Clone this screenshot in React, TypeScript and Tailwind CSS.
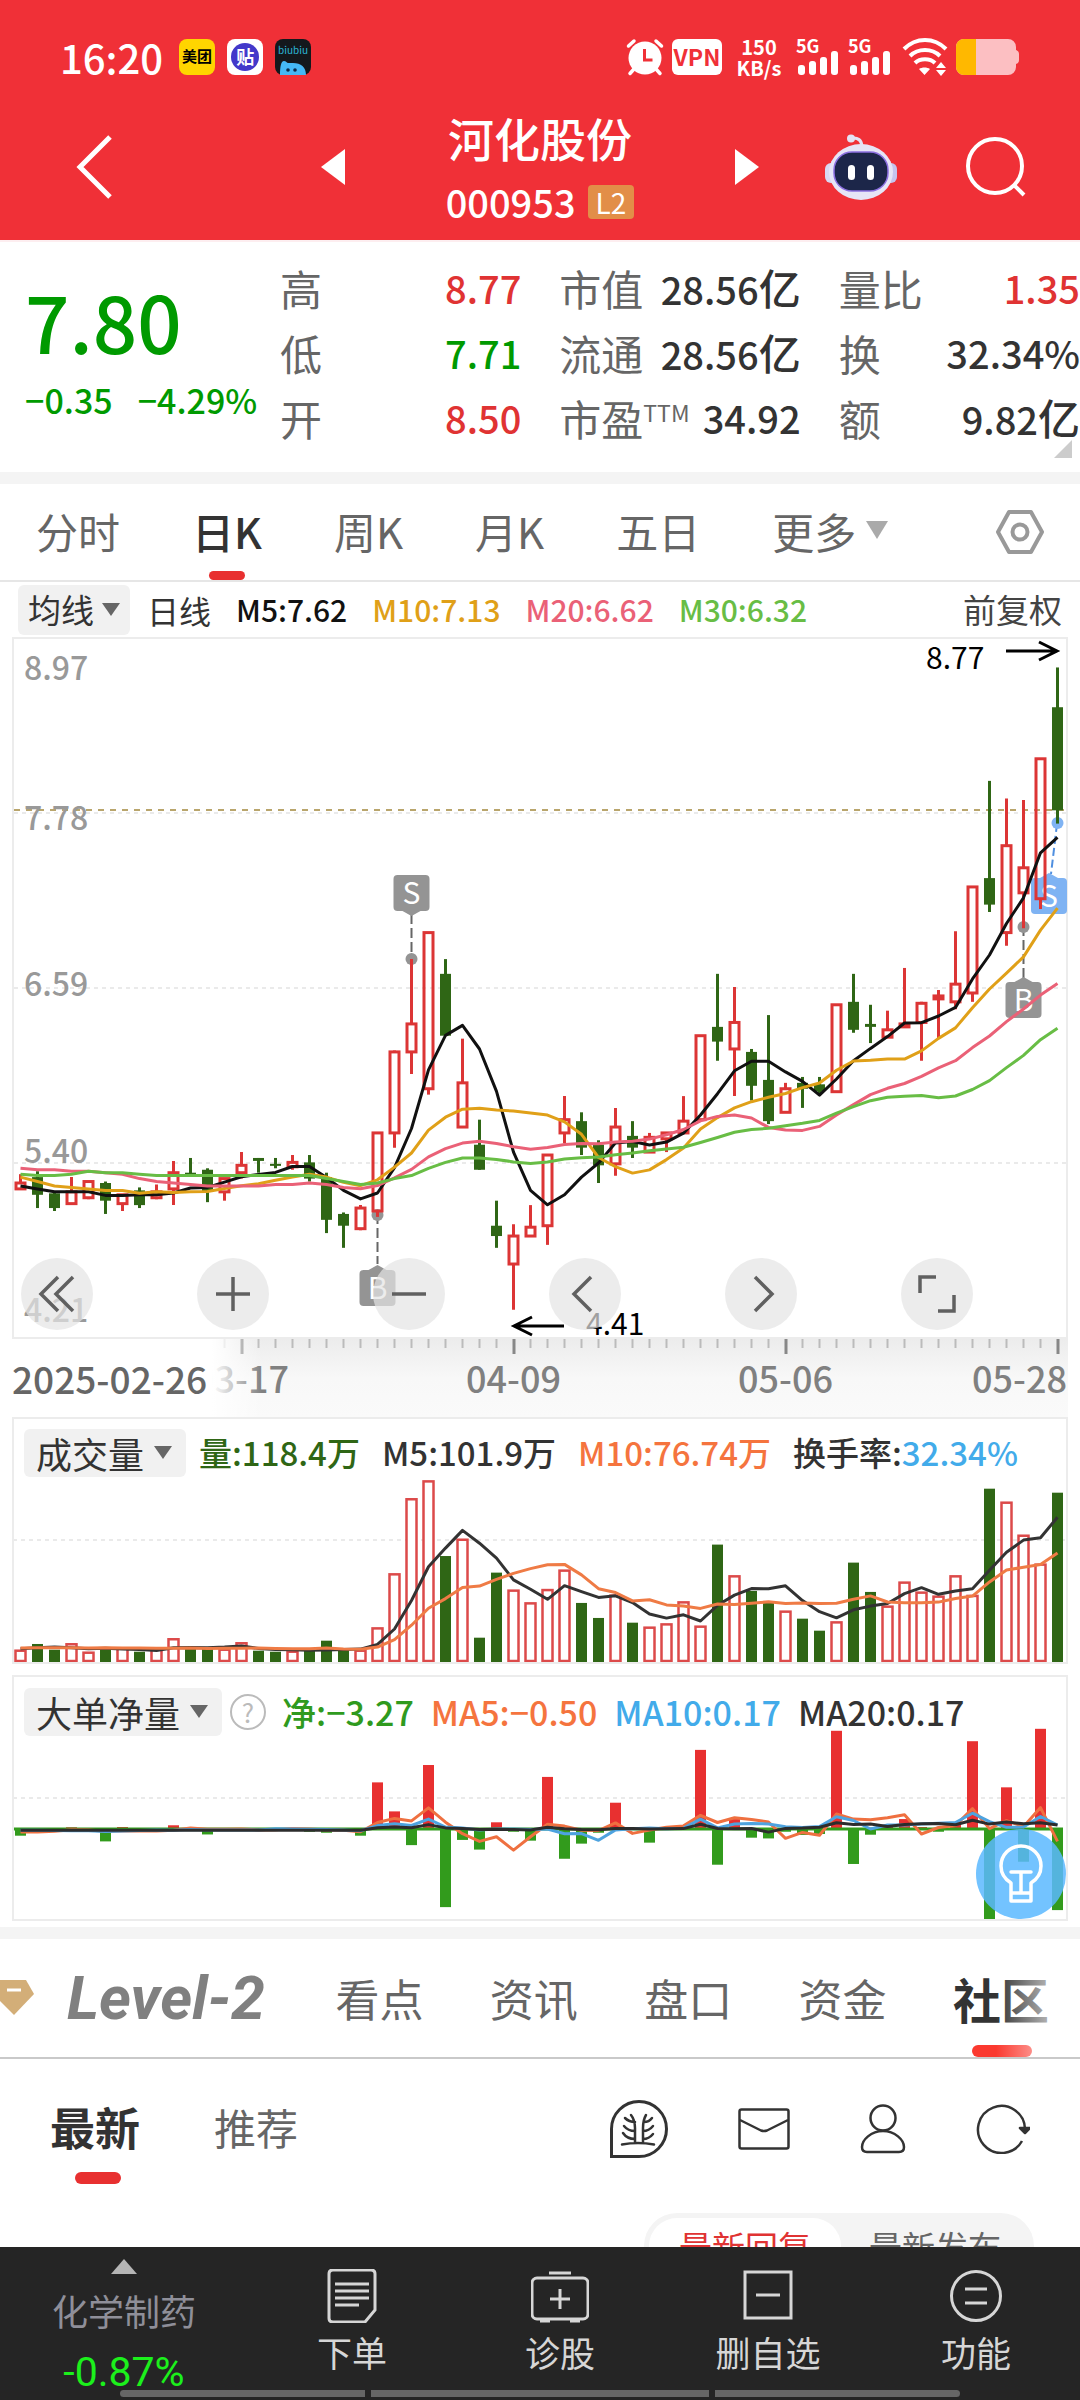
import { useState } from 'react';

type Candle = [open: number, close: number, high: number, low: number];

const candles: Candle[] = [
  [5.23, 5.27, 5.33, 5.23], [5.31, 5.19, 5.35, 5.1], [5.2, 5.1, 5.21, 5.08], [5.13, 5.21, 5.31, 5.12],
  [5.17, 5.28, 5.28, 5.16], [5.27, 5.15, 5.28, 5.06], [5.13, 5.19, 5.19, 5.08], [5.22, 5.12, 5.24, 5.1],
  [5.17, 5.21, 5.26, 5.16], [5.23, 5.34, 5.42, 5.12], [5.34, 5.32, 5.44, 5.32], [5.36, 5.21, 5.37, 5.14],
  [5.21, 5.3, 5.3, 5.15], [5.34, 5.39, 5.48, 5.3], [5.44, 5.42, 5.44, 5.34], [5.4, 5.39, 5.44, 5.37],
  [5.38, 5.41, 5.46, 5.36], [5.41, 5.3, 5.46, 5.28], [5.31, 5.02, 5.34, 4.93], [5.06, 4.98, 5.07, 4.83],
  [4.96, 5.1, 5.12, 4.95], [5.08, 5.61, 5.61, 5.04], [5.61, 6.16, 6.17, 5.51], [6.16, 6.35, 6.79, 6.01],
  [5.91, 6.97, 6.97, 5.87], [6.69, 6.27, 6.79, 6.27], [5.65, 5.95, 6.25, 5.65], [5.53, 5.36, 5.7, 5.36],
  [4.98, 4.91, 5.15, 4.83], [4.72, 4.91, 4.99, 4.41], [4.91, 4.97, 5.12, 4.91], [4.98, 5.46, 5.46, 4.85],
  [5.61, 5.7, 5.86, 5.54], [5.69, 5.51, 5.75, 5.46], [5.53, 5.39, 5.56, 5.27], [5.4, 5.65, 5.78, 5.32],
  [5.59, 5.51, 5.69, 5.44], [5.48, 5.58, 5.61, 5.48], [5.57, 5.61, 5.61, 5.48], [5.61, 5.69, 5.86, 5.61],
  [5.7, 6.27, 6.27, 5.7], [6.33, 6.23, 6.69, 6.1], [6.18, 6.36, 6.6, 5.86], [6.16, 5.93, 6.18, 5.83],
  [5.97, 5.69, 6.41, 5.67], [5.75, 5.91, 5.95, 5.75], [5.95, 5.91, 5.99, 5.78], [5.94, 5.89, 5.99, 5.87],
  [5.89, 6.48, 6.48, 5.89], [6.5, 6.31, 6.69, 6.29], [6.35, 6.33, 6.48, 6.22], [6.26, 6.31, 6.44, 6.26],
  [6.33, 6.35, 6.73, 6.33], [6.36, 6.49, 6.5, 6.1], [6.52, 6.54, 6.58, 6.25], [6.5, 6.62, 6.98, 6.45],
  [6.56, 7.28, 7.28, 6.5], [7.34, 7.16, 8.0, 7.11], [6.97, 7.56, 7.88, 6.88], [7.24, 7.41, 7.87, 7.0],
  [7.2, 8.15, 8.15, 7.13], [8.5, 7.8, 8.77, 7.71],
];

const volumes = [
  8.6, 12.6, 8.6, 13.1, 7.2, 10, 10, 7.2, 9.8, 16.6, 10.5, 9.3, 9.3, 13.8, 7.9, 7.2, 7.9, 7.9, 14.9, 9.3, 8.6,
  24.2, 62, 114.5, 127, 74.1, 86.2, 17, 62.5, 50.6, 41.7, 51, 64.6, 41.3, 30.8, 47.1, 27.5, 24.7, 27, 42.4, 25.4,
  82.1, 60.6, 49.7, 41.7, 35.9, 30.3, 21.9, 28.4, 69.5, 49, 39.4, 56.2, 49.2, 46.4, 60.6, 46.9, 121.2, 112.1, 89,
  68.8, 118.4,
];

const netVolumes = [
  -0.27, 0, -0.03, 0.07, 0, -0.5, 0.08, 0, 0, 0.15, 0, -0.22, 0, 0.04, 0, 0.04, 0, -0.11, -0.15, -0.04, -0.27, 1.88,
  0.71, -0.65, 2.58, -3.15, -0.44, -0.83, 0.27, -0.11, -0.47, 2.1, -1.2, -0.59, -0.15, 1.06, 0, -0.55, 0, 0.11, 3.19,
  -1.44, 0.4, -0.35, -0.38, -0.11, -0.24, -0.2, 3.96, -1.41, -0.23, 0.16, 0.4, 0.08, -0.11, 0.2, 3.54, -3.63, 1.68,
  -1.32, 4.04, -3.27,
];

const closes = candles.map((c) => c[1]);

// `head` holds the values for the first days, where the window reaches back before the visible range
const movingAverage = (values: number[], n: number, head: number[]) =>
  values.map((_, i) => (i < n - 1 ? head[i] : values.slice(i - n + 1, i + 1).reduce((a, b) => a + b, 0) / n));

const ma5 = movingAverage(closes, 5, [5.25, 5.23, 5.21, 5.21]);
const ma10 = movingAverage(closes, 10, [5.31, 5.28, 5.25, 5.24, 5.23, 5.22, 5.22, 5.2, 5.21]);
const ma20 = movingAverage(closes, 20, [
  5.37, 5.36, 5.36, 5.35, 5.35, 5.34, 5.33, 5.3, 5.28, 5.27, 5.26, 5.25, 5.25, 5.25, 5.25, 5.26, 5.26, 5.27, 5.26,
]);
const ma30 = movingAverage(closes, 30, [
  5.33, 5.32, 5.32, 5.33, 5.35, 5.34, 5.34, 5.33, 5.32, 5.32, 5.32, 5.32, 5.32, 5.32, 5.32, 5.32, 5.32, 5.32, 5.3,
  5.28, 5.26, 5.27, 5.3, 5.32, 5.37, 5.41, 5.44, 5.44, 5.43,
]);
const vol5 = movingAverage(volumes, 5, [10, 10.6, 11.2, 10.6]);
const vol10 = movingAverage(volumes, 10, [10.5, 10.7, 10.7, 10.7, 10.4, 10.7, 10.5, 10.4, 10.3]);
const net5 = movingAverage(netVolumes, 5, [-0.12, -0.12, -0.09, -0.03]);
const net10 = movingAverage(netVolumes, 10, [-0.05, -0.05, -0.06, -0.07, -0.07, -0.1, -0.08, -0.06, -0.04]);
const net20 = movingAverage(netVolumes, 20, Array(19).fill(-0.05));

const RED = '#dc3535';
const GREEN = '#2f6615';

const xAt = (i: number) => 7.5 + i * 17;
const priceY = (p: number) => (8.97 - p) * 147.3;
const volY = (v: number) => 245 - v * 1.43;
const netY = (v: number) => 153 - v * 24.8;

const Line = ({ data, y, color }: { data: number[]; y: (v: number) => number; color: string }) => (
  <polyline
    points={data.map((v, i) => `${xAt(i)},${y(v).toFixed(1)}`).join(' ')}
    fill="none"
    stroke={color}
    strokeWidth="3"
    strokeLinejoin="round"
  />
);

const SignalIcon = () => (
  <svg viewBox="0 0 44 38" className="h-[38px] w-11 overflow-visible" aria-hidden="true">
    <text x="0" y="15" fontSize="18" fontWeight="700" fill="#fff">5G</text>
    <rect x="2" y="27" width="7" height="10" rx="3" fill="#fff" />
    <rect x="13" y="23" width="7" height="14" rx="3" fill="#fff" />
    <rect x="24" y="19" width="7" height="18" rx="3" fill="#fff" />
    <rect x="35" y="13" width="7" height="24" rx="3" fill="#fff" />
  </svg>
);

const StatusBar = () => (
  <div className="flex h-[105px] items-center justify-between pt-2 pr-[60px] pl-[60px] text-white">
    <div className="flex items-center gap-3">
      <span className="mr-1 text-[40px] leading-none font-medium">16:20</span>
      <span className="flex h-9 w-9 items-center justify-center rounded-lg bg-[#ffd500] text-[15px] font-bold text-black">美团</span>
      <span className="flex h-9 w-9 items-center justify-center rounded-lg bg-white">
        <span className="flex h-7 w-7 items-center justify-center rounded-full bg-[#4338ca] text-[18px] font-bold text-white">贴</span>
      </span>
      <svg viewBox="0 0 36 36" className="h-9 w-9" aria-hidden="true">
        <rect width="36" height="36" rx="8" fill="#14181c" />
        <text x="18" y="15" textAnchor="middle" fontSize="10" fill="#2bb6d8">biubiu</text>
        <path d="M5 36c0-8 1-14 4-14 2 0 3 2 4 2h5c8 0 13 4 13 12z" fill="#45b8f5" />
        <circle cx="13" cy="31" r="1.8" fill="#0d2a4a" />
        <circle cx="20" cy="31" r="1.8" fill="#0d2a4a" />
      </svg>
    </div>
    <div className="flex items-center">
      <svg viewBox="0 0 38 38" className="mr-2 h-[38px] w-[38px]" aria-hidden="true">
        <g stroke="#fff" strokeWidth="3.5" strokeLinecap="round">
          <path d="M2.500 8L8 3M35.500 8L30 3M8 31l-4 4.500M30 31l4 4.500" />
        </g>
        <circle cx="19" cy="20" r="16.500" fill="#fff" />
        <path d="M18.500 11v11h8" fill="none" stroke="#f03037" strokeWidth="3" />
      </svg>
      <span className="flex h-9 w-[50px] items-center justify-center rounded-md bg-white text-[23px] leading-none font-bold text-[#f03037]">VPN</span>
      <span className="flex w-[74px] flex-col items-center text-[20px] leading-[21px] font-bold">
        <span>150</span>
        <span>KB/s</span>
      </span>
      <div className="flex gap-2">
        <SignalIcon />
        <SignalIcon />
      </div>
      <svg viewBox="0 0 46 38" className="ml-2.5 h-[38px] w-[46px]" aria-hidden="true">
        <g fill="none" stroke="#fff" strokeWidth="4">
          <path d="M2 11C14-1 32-1 44 11" />
          <path d="M8 18c8-8 22-8 30 0" />
          <path d="M13 25c5-5 15-5 20 0" />
        </g>
        <path d="M17 31c3-2 8-2 11 0l-5.500 6zM34 30l5-6 5 6zM34 32h10l-5 6z" fill="#fff" />
      </svg>
      <svg viewBox="0 0 64 36" className="ml-2 h-9 w-16" aria-hidden="true">
        <path d="M8 0h44a8 8 0 0 1 8 8v3q3 1 3 4v6q0 3-3 4v3a8 8 0 0 1-8 8H8a8 8 0 0 1-8-8V8a8 8 0 0 1 8-8z" fill="#fcbfc2" />
        <path d="M20 0H8a8 8 0 0 0-8 8v20a8 8 0 0 0 8 8h12z" fill="#ffb800" />
      </svg>
    </div>
  </div>
);

const Robot = () => (
  <svg viewBox="0 0 72 66" className="h-[66px] w-[72px]" aria-hidden="true">
    <path d="M27 4q9-1 10 8" fill="none" stroke="#e4e2f4" strokeWidth="3" />
    <circle cx="26" cy="4.500" r="4" fill="#e4e2f4" />
    <rect x="0" y="29" width="12" height="20" rx="6" fill="#d9d8f2" />
    <rect x="60" y="29" width="12" height="20" rx="6" fill="#c5c4ee" />
    <ellipse cx="36" cy="38" rx="32" ry="28" fill="#e6e5f6" />
    <rect x="9" y="18" width="54" height="39" rx="18" fill="#1c2649" stroke="#8b6fe0" strokeWidth="1.500" />
    <rect x="23" y="31" width="7" height="15" rx="3.500" fill="#fff" />
    <rect x="42" y="31" width="7" height="15" rx="3.500" fill="#fff" />
  </svg>
);

const TitleBar = () => (
  <div className="grid h-[135px] grid-cols-[1fr_438px_1fr] items-center pb-3 text-white">
    <button type="button" aria-label="返回" className="pl-[74px]">
      <svg viewBox="0 0 40 66" className="h-[66px] w-10" aria-hidden="true">
        <path d="M36 3L6 33l30 30" fill="none" stroke="#fff" strokeWidth="5" />
      </svg>
    </button>
    <div className="flex items-center justify-between">
      <button type="button" aria-label="上一只">
        <svg viewBox="0 0 24 36" className="h-9 w-6" aria-hidden="true"><path d="M24 0v36L0 18z" fill="#fff" /></svg>
      </button>
      <div className="flex flex-col items-center gap-5">
        <h1 className="text-[46px] leading-[50px] font-medium">河化股份</h1>
        <div className="flex items-center gap-3 text-[38px] leading-10 font-medium">
          000953
          <span className="rounded bg-[#e28e48] px-2 text-[28px] leading-[34px] font-normal">L2</span>
        </div>
      </div>
      <button type="button" aria-label="下一只">
        <svg viewBox="0 0 24 36" className="h-9 w-6" aria-hidden="true"><path d="M0 0v36l24-18z" fill="#fff" /></svg>
      </button>
    </div>
    <div className="flex items-center justify-between pr-[54px] pl-[66px]">
      <button type="button" aria-label="智能助手"><Robot /></button>
      <button type="button" aria-label="搜索">
        <svg viewBox="0 0 60 60" className="h-[60px] w-[60px]" aria-hidden="true">
          <circle cx="29" cy="29" r="27" fill="none" stroke="#fff" strokeWidth="4" />
          <path d="M48 48l10 10" stroke="#fff" strokeWidth="4" />
        </svg>
      </button>
    </div>
  </div>
);

type QuoteRowProps = { label: string; sup?: string; value: string; unit?: string; tone?: string };

const QuoteRow = ({ label, sup, value, unit, tone = 'text-[#333]' }: QuoteRowProps) => (
  <div className="flex h-[65px] items-center justify-between whitespace-nowrap">
    <dt className="text-[42px] text-[#666]">
      {label}
      {sup && <sup className="top-[-14px] text-[23px]">{sup}</sup>}
    </dt>
    <dd className={`text-[38px] font-medium ${tone}`}>
      {value}
      {unit && <span className="text-[42px]">{unit}</span>}
    </dd>
  </div>
);

const Quote = () => (
  <section className="relative flex h-[232px] border-t-2 border-[#fdeef0] bg-white">
    <div className="w-[280px] shrink-0 pt-[38px] pl-[25px] text-[#009a00]">
      <p className="text-[78px] leading-20 font-medium">7.80</p>
      <p className="mt-4 flex gap-[25px] text-[34px] leading-12 font-medium">
        <span>−0.35</span>
        <span>−4.29%</span>
      </p>
    </div>
    <dl className="grid flex-1 grid-cols-3 gap-x-[38px] pt-[13px] leading-[65px]">
      <div>
        <QuoteRow label="高" value="8.77" tone="text-[#e03333]" />
        <QuoteRow label="低" value="7.71" tone="text-[#009a00]" />
        <QuoteRow label="开" value="8.50" tone="text-[#e03333]" />
      </div>
      <div>
        <QuoteRow label="市值" value="28.56" unit="亿" />
        <QuoteRow label="流通" value="28.56" unit="亿" />
        <QuoteRow label="市盈" sup="TTM" value="34.92" />
      </div>
      <div>
        <QuoteRow label="量比" value="1.35" tone="text-[#e03333]" />
        <QuoteRow label="换" value="32.34%" />
        <QuoteRow label="额" value="9.82" unit="亿" />
      </div>
    </dl>
    <svg viewBox="0 0 18 18" className="absolute right-2 bottom-[14px] h-[18px] w-[18px]" aria-hidden="true">
      <path d="M18 0v18H0z" fill="#ccc" />
    </svg>
  </section>
);

const periods = ['分时', '日K', '周K', '月K', '五日', '更多'];

const Caret = ({ className }: { className: string }) => (
  <svg viewBox="0 0 20 14" preserveAspectRatio="none" className={className} aria-hidden="true"><path d="M0 0h20L10 14z" fill="currentColor" /></svg>
);

const PeriodTabs = () => {
  const [active, setActive] = useState('日K');
  return (
    <nav className="flex h-[98px] items-center justify-between border-b-2 border-[#e6e6e6] bg-white pr-9 pl-9">
      <div className="flex h-full gap-[72px]">
        {periods.map((p) => (
          <button
            key={p}
            type="button"
            onClick={() => setActive(p)}
            className={`relative flex items-center gap-2.5 pb-1 text-[42px] ${active === p ? 'font-medium text-[#333]' : 'text-[#666]'}`}
          >
            {p}
            {p === '更多' && <Caret className="h-[18px] w-[22px] text-[#aaa]" />}
            {active === p && <span className="absolute bottom-0 left-1/2 h-[9px] w-9 -translate-x-1/2 rounded-full bg-[#e83030]" />}
          </button>
        ))}
      </div>
      <button type="button" aria-label="设置">
        <svg viewBox="0 0 48 48" className="h-12 w-12" fill="none" stroke="#999" strokeWidth="4" strokeLinejoin="round" aria-hidden="true">
          <path d="M13 4h22l11 20-11 20H13L2 24z" />
          <circle cx="24" cy="24" r="7.500" />
        </svg>
      </button>
    </nav>
  );
};

const Chip = ({ children }: { children: string }) => (
  <button type="button" className="flex h-12 items-center gap-2.5 rounded-md bg-[#f1f1f1] pr-[14px] pl-3 text-[36px] font-normal whitespace-nowrap text-[#333]">
    {children}
    <Caret className="h-[13px] w-[18px] text-[#666]" />
  </button>
);

const Marker = ({ x, y, label, down, fill = '#949494' }: { x: number; y: number; label: string; down?: boolean; fill?: string }) => (
  <g>
    <rect x={x - 18} y={y} width="36" height="36" rx="4" fill={fill} />
    <path d={down ? `M${x - 9} ${y + 36}h18l-9 5z` : `M${x - 9} ${y}h18l-9-5z`} fill={fill} />
    <text x={x} y={y + 29} textAnchor="middle" fontSize="30" fill="#fff">{label}</text>
  </g>
);

const axisLabels = [
  { y: 42, text: '8.97' },
  { y: 192, text: '7.78' },
  { y: 358, text: '6.59' },
  { y: 525, text: '5.40' },
  { y: 684, text: '4.21' },
];

const chartButtons = [
  { label: '更早', path: 'M26 8L9 25l17 17M41 8L24 25l17 17' },
  { label: '放大', path: 'M25 8v34M8 25h34' },
  { label: '缩小', path: 'M8 25h34' },
  { label: '左移', path: 'M31 8L14 25l17 17' },
  { label: '右移', path: 'M19 8l17 17-17 17' },
  { label: '全屏', path: 'M8 24V8h16M42 26v16H26' },
];

const PriceChart = () => (
  <div className="relative mx-3 border-2 border-[#ececec]">
    <svg viewBox="1 1 1052 698" className="block h-auto w-full overflow-visible" role="img" aria-label="日K线图">
      <g stroke="#e3e3e3" strokeWidth="1.500" strokeDasharray="4 4">
        <path d="M1 175H1053M1 350H1053M1 525H1053" />
      </g>
      <path d="M1 172H1053" stroke="#b9a56c" strokeWidth="2" strokeDasharray="6 6" />
      {axisLabels.map((a) => (
        <text key={a.text} x="11" y={a.y} fontSize="32" fontWeight="500" fill="#999">{a.text}</text>
      ))}
      <g stroke="#666" strokeWidth="2" strokeDasharray="10 4">
        <path d="M398.500 276V322M364.500 576V626M1010.500 288V340" />
      </g>
      <path d="M1044 186L1038 236" stroke="#4f8fe0" strokeWidth="2" strokeDasharray="8 4" />
      <circle cx="398.500" cy="321" r="6" fill="#949494" />
      <circle cx="364.500" cy="577" r="6" fill="#949494" />
      <circle cx="1010.500" cy="289" r="6" fill="#949494" />
      <circle cx="1044.500" cy="185" r="6" fill="#7fb3f3" />
      <Marker x={398.5} y={237} label="S" down />
      <Marker x={364.5} y={632} label="B" />
      <Marker x={1010.5} y={344} label="B" />
      <Marker x={1036} y={240} label="S" fill="#7fb3f3" />
      {candles.map(([open, close, high, low], i) => {
        const x = xAt(i);
        const up = close >= open;
        const top = priceY(Math.max(open, close));
        const height = Math.max(Math.abs(priceY(open) - priceY(close)), 2);
        return up ? (
          <g key={i} stroke={RED} strokeWidth="3" fill="none">
            <path d={`M${x} ${priceY(high)}V${top}M${x} ${top + height}V${priceY(low)}`} />
            <rect x={x - 4.5} y={top} width="9" height={height} />
          </g>
        ) : (
          <g key={i} fill={GREEN}>
            <rect x={x - 1.5} y={priceY(high)} width="3" height={priceY(low) - priceY(high)} />
            <rect x={x - 5.5} y={top} width="11" height={height} />
          </g>
        );
      })}
      <Line data={ma5} y={priceY} color="#111" />
      <Line data={ma10} y={priceY} color="#e0a018" />
      <Line data={ma20} y={priceY} color="#ea6177" />
      <Line data={ma30} y={priceY} color="#68bd45" />
      <text x="913" y="31" fontSize="30" fill="#000">8.77</text>
      <text x="573" y="697" fontSize="30" fill="#000">4.41</text>
      <path d="M993 13h50M1026 4l18 9-18 9M551 688h-49M519 679l-18 9 18 9" fill="none" stroke="#000" strokeWidth="3" />
    </svg>
    <div className="absolute bottom-[7px] left-[7px] flex gap-[104px]">
      {chartButtons.map((b) => (
        <button key={b.label} type="button" aria-label={b.label} className="flex h-[72px] w-[72px] items-center justify-center rounded-full bg-[#e4e4e4]/70">
          <svg viewBox="0 0 50 50" className="h-[50px] w-[50px]" fill="none" stroke="#606060" strokeWidth="3.500" aria-hidden="true">
            <path d={b.path} />
          </svg>
        </button>
      ))}
    </div>
  </div>
);

const dates = [
  { i: 13, text: '03-17' },
  { i: 29, text: '04-09' },
  { i: 45, text: '05-06' },
];

const TimeAxis = () => (
  <div className="relative mx-3 bg-linear-to-b from-[#ececec] via-[#f8f8f8] to-[#fafafa]">
    <svg viewBox="0 0 1056 78" className="block h-auto w-full" aria-hidden="true">
      {candles.map((_, i) => (
        <rect key={i} x={xAt(i)} y="0" width={i % 16 === 13 ? 3 : 2} height={i % 16 === 13 ? 15 : 9} fill={i % 16 === 13 ? '#888' : '#bbb'} />
      ))}
      {dates.map((d) => (
        <text key={d.text} x={xAt(d.i) + 1} y="54" textAnchor="middle" fontSize="36" fontWeight="500" fill="#808080">{d.text}</text>
      ))}
      <text x="1055" y="54" textAnchor="end" fontSize="36" fontWeight="500" fill="#808080">05-28</text>
    </svg>
    <span className="absolute inset-y-0 left-0 flex w-[250px] items-start bg-linear-to-r from-white from-80% to-transparent pt-5 text-[37px] leading-[38px] font-medium whitespace-nowrap text-[#666]">
      2025-02-26
    </span>
  </div>
);

const VolumeChart = () => (
  <div className="relative mx-3 border-2 border-[#ececec]">
    <div className="absolute top-[9px] left-[10px] flex items-center gap-[13px] text-[33px] font-medium whitespace-nowrap">
      <Chip>成交量</Chip>
      <div className="flex gap-[22px]">
        <span className="text-[#2f6615]">量:118.4万</span>
        <span className="text-[#333]">M5:101.9万</span>
        <span className="text-[#f5743e]">M10:76.74万</span>
        <span className="text-[#333]">换手率:<span className="text-[#42abea]">32.34%</span></span>
      </div>
    </div>
    <svg viewBox="1 1 1052 243" className="block h-auto w-full" role="img" aria-label="成交量">
      <path d="M0 122H1056" stroke="#e3e3e3" strokeWidth="1.500" strokeDasharray="4 4" />
      {volumes.map((v, i) => {
        const up = candles[i][1] >= candles[i][0];
        return up ? (
          <rect key={i} x={xAt(i) - 5} y={volY(v)} width="10" height={243 - volY(v)} fill="#fff" stroke="#dc4a4a" strokeWidth="2.5" />
        ) : (
          <rect key={i} x={xAt(i) - 5.5} y={volY(v) - 1} width="11" height={246 - volY(v)} fill={GREEN} />
        );
      })}
      <Line data={vol5} y={volY} color="#333" />
      <Line data={vol10} y={volY} color="#ef7b45" />
    </svg>
  </div>
);

const NetChart = () => (
  <div className="relative mx-3 mt-[11px] border-2 border-[#ececec]">
    <div className="absolute top-[9px] left-[10px] z-10 flex items-center gap-2 text-[34px] font-medium whitespace-nowrap">
      <Chip>大单净量</Chip>
      <button type="button" aria-label="说明" className="flex h-9 w-9 items-center justify-center rounded-full border-2 border-[#bbb] text-[26px] leading-none font-normal text-[#bbb]">?</button>
      <div className="ml-2 flex gap-[17px]">
        <span className="text-[#2f9a1e]">净:−3.27</span>
        <span className="text-[#f5743e]">MA5:−0.50</span>
        <span className="text-[#42abea]">MA10:0.17</span>
        <span className="text-[#333]">MA20:0.17</span>
      </div>
    </div>
    <svg viewBox="1 1 1052 242" className="block h-auto w-full" role="img" aria-label="大单净量">
      <path d="M0 122H1056" stroke="#e3e3e3" strokeWidth="1.500" strokeDasharray="4 4" />
      {netVolumes.map((v, i) => (
        <rect
          key={i}
          x={xAt(i) - 5.5}
          y={Math.min(netY(0), netY(v))}
          width="11"
          height={Math.abs(netY(v) - netY(0))}
          fill={v > 0 ? '#e83030' : '#329b1c'}
        />
      ))}
      <path d="M0 153H1050" stroke="#329b1c" strokeWidth="3" />
      <Line data={net5} y={netY} color="#ef7040" />
      <Line data={net10} y={netY} color="#4ea3df" />
      <Line data={net20} y={netY} color="#2c2c2c" />
    </svg>
    <button type="button" aria-label="提示" className="absolute right-0 bottom-0 flex h-[90px] w-[90px] items-center justify-center rounded-full bg-[#5ab8ff]/85">
      <svg viewBox="0 0 46 60" className="h-[60px] w-[46px]" fill="none" stroke="#fff" strokeWidth="3.500" strokeLinejoin="round" strokeLinecap="round" aria-hidden="true">
        <path d="M13 39C5 34 3 28 3 22a20 20 0 0 1 40 0c0 6-2 12-10 17v18H13zM13 49h20M13 28h20M23 28v21" />
      </svg>
    </button>
  </div>
);

const sections = ['看点', '资讯', '盘口', '资金'];

const SectionTabs = () => (
  <nav className="relative flex h-[120px] items-center overflow-hidden border-b-2 border-[#c9c9c9] bg-white pr-[31px]">
    <svg viewBox="0 0 34 36" className="h-9 w-[34px] shrink-0" aria-hidden="true">
      <path d="M0 0h26l8 14-20 21L0 21z" fill="#d3ae78" />
      <path d="M7 10h14" stroke="#fff" strokeWidth="3" />
    </svg>
    <div className="ml-[33px] flex flex-1 items-center justify-between text-[44px] text-[#666]">
      <a href="#level2" className="mr-1 font-[Roboto] text-[61px] leading-none font-bold text-[#808080] italic">Level-2</a>
      {sections.map((s) => (
        <a key={s} href={`#${s}`}>{s}</a>
      ))}
      <a href="#社区" className="relative flex h-[118px] items-center text-[48px] font-bold text-[#333]">
        社区
        <span className="absolute bottom-0 left-[19px] h-3 w-[60px] rounded-full bg-[#fb392f]" />
      </a>
    </div>
    <span className="pointer-events-none absolute top-0 right-0 bottom-0 w-[84px] bg-linear-to-r from-transparent to-white" />
  </nav>
);

const Community = () => (
  <section className="bg-white">
    <div className="flex items-start justify-between pt-[37px] pr-[50px] pl-[50px]">
      <div className="flex gap-[74px]">
        <button type="button" className="relative pb-[26px] text-[45px] leading-[62px] font-bold text-[#333]">
          最新
          <span className="absolute bottom-0 left-[25px] h-3 w-[46px] rounded-full bg-[#e83030]" />
        </button>
        <button type="button" className="pb-[26px] text-[42px] leading-[62px] text-[#666]">推荐</button>
      </div>
      <div className="flex h-[66px] items-center gap-[70px] text-[#333]">
        <button type="button" aria-label="韭菜公社">
          <svg viewBox="0 0 58 58" className="h-[58px] w-[58px]" fill="none" stroke="currentColor" strokeWidth="2.500" strokeLinecap="round" aria-hidden="true">
            <path d="M1.500 56.500V29A27.500 27.500 0 1 1 29 56.500z" strokeWidth="3" />
            <path d="M12 44.500q16-3 32 0M25 43V28q0-8-4-13M33 43V28q0-8 3-13M25 22q-6 0-10-4M25 31q-7 0-11-5M25 39q-8 0-12-6M34 22q5 0 8-4M33 31q6 0 10-5M33 39q6 0 10-5" />
          </svg>
        </button>
        <button type="button" aria-label="消息">
          <svg viewBox="0 0 52 42" className="h-[42px] w-[52px]" fill="none" stroke="currentColor" strokeWidth="2.500" strokeLinejoin="round" aria-hidden="true">
            <rect x="1.500" y="1.500" width="49" height="39" rx="2" />
            <path d="M2 12l21 10.500q3 1 6 0L50 12" />
          </svg>
        </button>
        <button type="button" aria-label="我的">
          <svg viewBox="0 0 46 50" className="h-[50px] w-[46px]" fill="none" stroke="currentColor" strokeWidth="2.500" aria-hidden="true">
            <circle cx="23" cy="14" r="12.500" />
            <path d="M23 27C11 27 2 36 2 43q0 5 5 5h32q5 0 5-5C44 36 35 27 23 27z" />
          </svg>
        </button>
        <button type="button" aria-label="刷新">
          <svg viewBox="0 0 54 50" className="h-[50px] w-[54px]" fill="none" stroke="currentColor" strokeWidth="2.500" aria-hidden="true">
            <path d="M46 37a23.500 23.500 0 1 1 3-12" />
            <path d="M44 24h10l-5 5z" fill="currentColor" strokeLinejoin="round" />
          </svg>
        </button>
      </div>
    </div>
    <div className="mt-[29px] mr-[46px] ml-auto flex w-fit rounded-full bg-[#f4f4f4] p-[5px] text-[33px] leading-[56px]">
      <button type="button" className="rounded-full bg-white px-[30px] text-[#e03333]">最新回复</button>
      <button type="button" className="px-7 text-[#666]">最新发布</button>
    </div>
  </section>
);

const actions = [
  {
    label: '下单',
    icon: (
      <>
        <path d="M5 1h38q4 0 4 4v36L37 53H5q-4 0-4-4V5q0-4 4-4z" />
        <path d="M7 15h34M7 22h34M7 29h34M7 36h24" />
      </>
    ),
  },
  {
    label: '诊股',
    icon: (
      <>
        <rect x="-4" y="9" width="56" height="41" rx="5" />
        <path d="M13 4h22M24 20v20M14 30h20M4 52h10M34 52h10" />
      </>
    ),
  },
  {
    label: '删自选',
    icon: (
      <>
        <rect x="1" y="3" width="46" height="46" />
        <path d="M12 26h24" />
      </>
    ),
  },
  {
    label: '功能',
    icon: (
      <>
        <circle cx="24" cy="27" r="24.5" />
        <path d="M13 20h22M13 34h22" />
      </>
    ),
  },
];

const BottomBar = () => (
  <footer className="relative flex h-[153px] shrink-0 bg-[#252525]">
    <button type="button" className="flex w-[248px] flex-col items-center pt-3">
      <svg viewBox="0 0 26 15" className="h-[15px] w-[26px]" aria-hidden="true"><path d="M0 15h26L13 0z" fill="#b5b5b5" /></svg>
      <span className="mt-[11px] text-[36px] leading-[50px] text-[#8f8f99]">化学制药</span>
      <span className="mt-[13px] font-[Roboto] text-[41px] leading-[48px] text-[#1cf01c]">-0.87%</span>
    </button>
    <div className="grid flex-1 grid-cols-4">
      {actions.map((a) => (
        <button key={a.label} type="button" className="flex flex-col items-center pt-[22px] text-[35px] leading-[50px] text-[#d6d6d6]">
          <svg viewBox="-5 0 58 54" className="mb-1 h-[54px] w-[58px]" fill="none" stroke="#d6d6d6" strokeWidth="3" aria-hidden="true">
            {a.icon}
          </svg>
          {a.label}
        </button>
      ))}
    </div>
    <div className="absolute inset-x-[120px] bottom-[3px] flex gap-[6px]">
      <span className="h-[7px] w-[245px] rounded-l-full bg-[#666]" />
      <span className="h-[7px] flex-1 bg-[#666]" />
      <span className="h-[7px] w-[245px] rounded-r-full bg-[#666]" />
    </div>
  </footer>
);

const App = () => (
  <div lang="zh-CN" className="flex h-screen flex-col overflow-hidden bg-white font-['Noto_Sans_CJK_SC',sans-serif]">
    <header className="shrink-0 bg-[#f03037]">
      <StatusBar />
      <TitleBar />
    </header>
    <main className="min-h-0 flex-1 overflow-hidden">
      <Quote />
      <div className="h-3 bg-[#f4f4f4]" />
      <PeriodTabs />
      <div className="flex h-[55px] items-center gap-[25px] pr-[18px] pl-[18px] text-[30px] font-medium whitespace-nowrap">
        <button type="button" className="-mr-2 flex h-[50px] items-center gap-2 rounded-md bg-[#f1f1f1] px-2.5 text-[33px] font-normal text-[#333]">
          均线
          <Caret className="h-[13px] w-[18px] text-[#666]" />
        </button>
        <span className="text-[32px] font-normal text-[#333]">日线</span>
        <span className="text-[#111]">M5:7.62</span>
        <span className="text-[#e0a018]">M10:7.13</span>
        <span className="text-[#ea6177]">M20:6.62</span>
        <span className="text-[#68bd45]">M30:6.32</span>
        <span className="ml-auto text-[33px] font-normal text-[#444]">前复权</span>
      </div>
      <PriceChart />
      <TimeAxis />
      <VolumeChart />
      <NetChart />
      <div className="mt-[6px] h-3 bg-[#f4f4f4]" />
      <SectionTabs />
      <Community />
    </main>
    <BottomBar />
  </div>
);

export default App;
